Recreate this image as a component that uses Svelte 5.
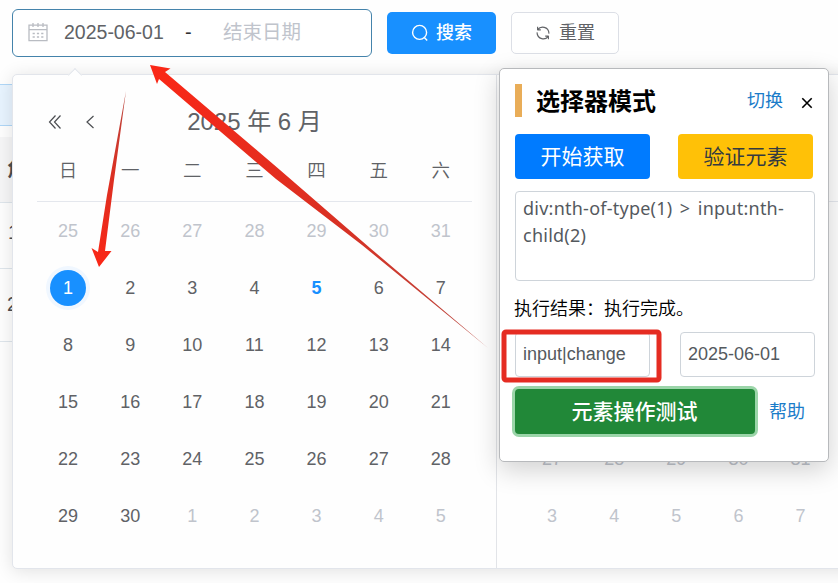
<script>
  const weekdays = ['日', '一', '二', '三', '四', '五', '六'];

  const june = Array.from({ length: 6 }, (_, w) =>
    Array.from({ length: 7 }, (_, d) => {
      const n = w * 7 + d - 6;
      if (n < 1) return { day: 31 + n, out: true };
      if (n > 30) return { day: n - 30, out: true };
      return { day: n, out: false };
    })
  );
  const selected = 1;
  const today = 5;
  const nextWeeks = [[27, 28, 29, 30, 31], [3, 4, 5, 6, 7]];
</script>

<div class="page">
  <header class="toolbar">
    <div class="range">
      <svg class="cal" width="20" height="20" viewBox="0 0 20 20" fill="none" stroke="#b9bcc2" stroke-width="1.3">
        <path d="M1 3.2H19V18.7H1ZM1 7.7H19M5 1V5M10 1V5M15 1V5" />
        <path d="M4.6 11.5H6.8M8.9 11.5H11.1M13.2 11.5H15.4M4.6 15H6.8M8.9 15H11.1M13.2 15H15.4" />
      </svg>
      <span class="start">2025-06-01</span>
      <span class="sep">-</span>
      <span class="end">结束日期</span>
    </div>
    <button class="btn search">
      <svg width="18" height="18" viewBox="0 0 18 18" fill="none" stroke="#fff" stroke-width="1.4">
        <circle cx="8.6" cy="8.4" r="7" /><path d="M13.3 13.6L16.2 16.6" />
      </svg>
      <span>搜索</span>
    </button>
    <button class="btn reset">
      <svg width="16" height="16" viewBox="0 0 16 16" fill="none" stroke="#606266" stroke-width="1.15">
        <path d="M2.6 5.2V1.8M2.6 4.9H5.8M2.8 4.7C5.5.8 13.6 1.2 14 8.6M13.4 10.8V14.2M13.4 11.1H10.2M13.2 11.3C10.5 15.2 2.4 14.8 2 7.4" />
      </svg>
      <span>重置</span>
    </button>
  </header>

  <div class="alert"></div>
  <div class="table">
    <div class="thead"><b>角</b></div>
    <div class="trow first">1</div>
    <div class="trow second">2</div>
  </div>

  <section class="picker">
    <span class="caret"></span>
    <div class="month">
      <div class="head">
        <svg class="nav" width="50" height="16" viewBox="0 0 50 16" fill="none" stroke="#4c4e52" stroke-width="1.2">
          <path d="M7.5 1.5L1.5 8L7.5 14.5M12.5 1.5L6.5 8L12.5 14.5M45.5 2L39 8L45.5 14" />
        </svg>
        <span>2025 年 6 月</span>
      </div>
      <div class="grid names">
        {#each weekdays as name}<span>{name}</span>{/each}
      </div>
      {#each june as week}
        <div class="grid days">
          {#each week as cell}
            <span class:out={cell.out} class:today={!cell.out && cell.day === today}>
              {#if !cell.out && cell.day === selected}<i>{cell.day}</i>{:else}{cell.day}{/if}
            </span>
          {/each}
        </div>
      {/each}
    </div>
    <div class="month next">
      <div class="rule"></div>
      {#each nextWeeks as week}
        <div class="grid days">
          {#each week as day}<span class="out">{day}</span>{/each}
        </div>
      {/each}
    </div>
  </section>

  <aside class="panel">
    <div class="title">
      <span class="bar"></span>
      <h2>选择器模式</h2>
      <a>切换</a>
      <svg width="12" height="12" viewBox="0 0 12 12" fill="none" stroke="#000" stroke-width="1.6"><path d="M1.3 1.3L10.7 10.7M10.7 1.3L1.3 10.7" /></svg>
    </div>
    <div class="pair buttons">
      <button class="get">开始获取</button>
      <button class="verify">验证元素</button>
    </div>
    <div class="selector">div:nth-of-type(1) &gt; input:nth-child(2)</div>
    <p>执行结果：执行完成。</p>
    <div class="pair fields">
      <div class="field">input|change</div>
      <div class="field">2025-06-01</div>
    </div>
    <div class="actions">
      <button class="test">元素操作测试</button>
      <a>帮助</a>
    </div>
  </aside>

  <svg class="marks" width="838" height="583" viewBox="0 0 838 583">
    <defs>
      <linearGradient id="long" gradientUnits="userSpaceOnUse" x1="150" y1="65" x2="488" y2="348">
        <stop offset="0" stop-color="#fb2716" /><stop offset=".55" stop-color="#d93023" /><stop offset="1" stop-color="#b84a42" />
      </linearGradient>
      <linearGradient id="short" gradientUnits="userSpaceOnUse" x1="99" y1="267" x2="126" y2="90">
        <stop offset="0" stop-color="#fb2716" /><stop offset=".55" stop-color="#d93023" /><stop offset="1" stop-color="#b84a42" />
      </linearGradient>
    </defs>
    <path fill="url(#long)" d="M150 65L170.5 68.5L165 72L280 170L370 248L488 348L362 245L276 179L159 79L157 84Z" />
    <path fill="url(#short)" d="M126 91L114 180L105 251L111.5 251L99 267L91.5 248L98 252L107 195Z" />
    <rect x="504" y="332" width="155" height="48" rx="2" fill="none" stroke="#e52c22" stroke-width="5" />
  </svg>
</div>

<style>
  :global(body) { margin: 0; }
  .page { position: relative; width: 838px; height: 583px; overflow: hidden; background: #fefefe; color: #606266; font-family: "Liberation Sans", "Noto Sans CJK SC", sans-serif; }
  .page * { box-sizing: border-box; }
  button { font: inherit; border: 0; padding: 0; white-space: nowrap; }
  .toolbar { display: flex; align-items: center; padding: 9px 12px 0; height: 57px; }
  .range { display: flex; align-items: center; width: 360px; height: 48px; border: 1px solid #4483ab; border-radius: 6px; padding-left: 15px; background: #fff; line-height: 44px; padding-bottom: 2px; }
  .cal { margin-top: -1px; }
  .start { width: 102px; margin-left: 16px; font-size: 19.5px; }
  .sep { width: 14px; margin-left: 19px; color: #303133; font-size: 20px; }
  .end { margin-left: 24px; color: #c0c4cc; font-size: 19.5px; }
  .btn { display: flex; align-items: center; justify-content: center; height: 42px; border-radius: 5px; font-size: 18px; }
  .btn span { padding-bottom: 4px; }
  .search { width: 109px; margin-left: 15px; gap: 7px; background: #1890ff; color: #fff; font-weight: 500; }
  .reset { width: 108px; margin-left: 15px; gap: 8px; background: #fff; color: #606266; border: 1px solid #dcdfe6; }
  .alert { height: 42px; margin-top: 27px; background: #e8f4ff; border: 1px solid #b0d7f7; border-left: 0; }
  .table { margin-top: 11px; height: 205px; }
  .thead { height: 66px; background: #f6f6f7; border-bottom: 1px solid #dfe6ec; padding: 20px 0 0 7px; font-size: 18px; line-height: 27px; color: #4c4d50; }
  .trow { border-bottom: 1px solid #dfe6ec; padding-left: 8px; font-size: 20px; color: #4c4d50; }
  .first { height: 66px; line-height: 59px; }
  .second { height: 73px; line-height: 71px; padding-left: 7px; }
  .picker { position: absolute; left: 12px; top: 74px; width: 970px; height: 495px; display: flex; background: #fefefe; border: 1px solid #e2e5eb; border-radius: 5px; box-shadow: 0 2px 18px rgba(0, 0, 0, .12); }
  .caret { position: absolute; left: 57px; top: -5px; width: 10px; height: 10px; background: #fefefe; border: 1px solid #e2e5eb; border-width: 1px 0 0 1px; transform: rotate(45deg); }
  .month { width: 484px; padding: 24px 24px 0; border-right: 1px solid #e2e4e8; }
  .next { padding-top: 126px; }
  .rule { height: 229px; border-top: 1px solid #e4e7ed; }
  .head { position: relative; height: 46px; text-align: center; font-size: 24px; line-height: 46px; }
  .nav { position: absolute; left: 11px; top: 15px; }
  .grid { display: grid; grid-template-columns: repeat(7, 62.14px); text-align: center; font-size: 18px; }
  .names { height: 57px; line-height: 52px; border-bottom: 1px solid #e4e7ed; font-weight: 350; font-size: 18.5px; }
  .days { height: 57px; line-height: 59px; }
  .out { color: #c0c4cc; }
  .today { color: #1890ff; font-weight: 700; }
  i { display: block; width: 36px; height: 36px; margin: 11px auto 0; border-radius: 50%; background: #1890ff; color: #fff; font-style: normal; line-height: 36px; box-shadow: 0 0 0 4px #f0f7ff; }
  .panel { position: absolute; left: 499px; top: 68px; width: 330px; height: 394px; padding: 15px 13px 0 15px; background: #fff; border: 1px solid #b7b9bc; border-radius: 5px; box-shadow: 0 8px 26px rgba(0, 0, 0, .18); }
  .title { display: flex; align-items: center; height: 33px; }
  .bar { width: 7px; height: 33px; background: #e9ad58; }
  h2 { width: 122px; margin: 2px 0 0 14px; font-size: 24px; line-height: 33px; color: #000; white-space: nowrap; }
  a { color: #1b7cc9; font-size: 18px; }
  .title a { margin-left: 89px; line-height: 28px; height: 28px; }
  .title svg { margin: 4px 0 0 18px; }
  .pair { display: flex; }
  .buttons { gap: 28px; margin-top: 17px; font-size: 21px; }
  .buttons button { width: 135px; height: 45px; padding: 0 0 4px; border-radius: 4px; }
  .get { background: #007bff; color: #fff; }
  .verify { background: #ffc107; color: #343a40; }
  .selector { width: 300px; height: 90px; margin-top: 12px; padding: 3px 7px; border: 1px solid #ced4da; border-radius: 4px; font: 18px/27px "Noto Sans", sans-serif; word-spacing: 2.5px; letter-spacing: .24px; color: #54595e; }
  p { margin: 14px 0 0 -1px; height: 28px; font-size: 18px; line-height: 28px; color: #000; font-weight: 350; white-space: nowrap; }
  .fields { margin-top: 9px; gap: 30px; font-size: 18px; }
  .field { width: 135px; height: 45px; padding-left: 7px; border: 1px solid #ced4da; border-radius: 4px; line-height: 43px; color: #54595e; }
  .actions { display: flex; align-items: center; margin-top: 12px; }
  .test { width: 240px; height: 45px; padding: 0 1px 4px 0; border-radius: 4px; background: #218838; color: #fff; font-size: 21px; font-weight: 500; box-shadow: 0 0 0 3px #9bd5a9; }
  .actions a { margin: -3px 0 0 14px; }
  .marks { position: absolute; left: 0; top: 0; }
</style>
